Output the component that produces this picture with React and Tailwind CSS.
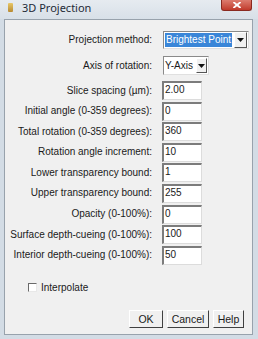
import React from "react";

const rows = [
  ["Slice spacing (µm):", "2.00"],
  ["Initial angle (0-359 degrees):", "0"],
  ["Total rotation (0-359 degrees):", "360"],
  ["Rotation angle increment:", "10"],
  ["Lower transparency bound:", "1"],
  ["Upper transparency bound:", "255"],
  ["Opacity (0-100%):", "0"],
  ["Surface depth-cueing (0-100%):", "100"],
  ["Interior depth-cueing (0-100%):", "50"],
];

const buttons = [
  ["OK", "w-[34px]"],
  ["Cancel", "w-[42px]"],
  ["Help", "w-[31px]"],
];

function Arrow() {
  return (
    <svg width="7" height="4" viewBox="0 0 7 4">
      <path d="M0 0 H7 L3.5 4 Z" fill="#111" />
    </svg>
  );
}

function Label({ children }) {
  return (
    <div className="w-[147px] shrink-0 text-right text-[10px] leading-none text-[#1a1a1a] whitespace-nowrap">
      {children}
    </div>
  );
}

export default function App() {
  return (
    <div
      className="w-[258px] h-[339px] bg-[#d3dce5] flex flex-col overflow-hidden"
      style={{ fontFamily: '"Liberation Sans", Arial, sans-serif' }}
    >
      {/* title bar */}
      <div className="h-[19px] shrink-0 flex items-start bg-gradient-to-b from-[#e6ebf0] to-[#d8e0e8]">
        <div className="mt-[3px] ml-[8px] w-[5px] h-[9px] bg-gradient-to-b from-[#e8c868] to-[#b88a30] rounded-[1px]" />
        <div
          className="ml-[9px] mt-[1px] text-[11px] leading-[13px] text-[#1e2a36]"
          style={{ fontFamily: '"Noto Sans", "Open Sans", sans-serif' }}
        >
          3D Projection
        </div>
        <div className="ml-auto mr-[6px] w-[31px] h-[11px] rounded-b-[3px] bg-gradient-to-b from-[#dc7b6e] to-[#c0392b] border border-t-0 border-[#8a2a20] flex items-center justify-center">
          <svg width="8" height="6" viewBox="0 0 8 6">
            <path d="M1 0.5 L7 5.5 M7 0.5 L1 5.5" stroke="#fff" strokeWidth="1.8" strokeLinecap="round" />
          </svg>
        </div>
      </div>

      {/* panel */}
      <div className="ml-[4px] w-[249px] h-[316px] shrink-0 border border-[#98a2ac] bg-[#f0f0f0] flex flex-col pt-[11px]">
        {/* projection method */}
        <div className="flex items-center h-[18px]">
          <Label>Projection method:</Label>
          <div className="ml-[11px] h-[18px] w-[86px] bg-white border border-t-[#8a8a8a] border-l-[#8a8a8a] border-b-[#e0e0e0] border-r-[#e0e0e0] flex items-center pl-[1px]">
            <div className="h-[14px] w-[67px] bg-[#3a86d8] text-white text-[10px] leading-[14px] pl-[1px] whitespace-nowrap">
              Brightest Point
            </div>
            <div className="ml-[2px] h-[16px] w-[13px] bg-[#f0f0f0] border border-t-white border-l-white border-b-[#555] border-r-[#555] flex items-center justify-center">
              <Arrow />
            </div>
          </div>
        </div>

        {/* axis */}
        <div className="flex items-center h-[19px] mt-[7px]">
          <Label>Axis of rotation:</Label>
          <div className="ml-[11px] h-[19px] w-[46px] bg-white border border-t-[#8a8a8a] border-l-[#8a8a8a] border-b-[#e0e0e0] border-r-[#e0e0e0] flex items-center pl-[1px]">
            <div className="text-[10px] leading-none text-[#1a1a1a] whitespace-nowrap">Y-Axis</div>
            <div className="ml-auto mr-[1px] h-[15px] w-[11px] bg-[#f0f0f0] border border-t-white border-l-white border-b-[#555] border-r-[#555] flex items-center justify-center">
              <Arrow />
            </div>
          </div>
        </div>

        {/* fields */}
        <div className="flex flex-col gap-[1.6px] mt-[6px]">
          {rows.map(([label, value]) => (
            <div key={label} className="flex items-center h-[19px]">
              <Label>{label}</Label>
              <div className="ml-[10px] h-[19px] w-[40px] bg-white border-t-2 border-l-2 border-t-[#7c7c7c] border-l-[#7c7c7c] border-b border-r border-b-[#dcdcdc] border-r-[#dcdcdc] text-[10px] leading-[12px] pl-[1px] pt-[1px] text-[#1a1a1a]">
                {value}
              </div>
            </div>
          ))}
        </div>

        {/* checkbox */}
        <div className="flex items-center mt-[18px] pl-[23px] h-[10px]">
          <div className="w-[9px] h-[9px] bg-white border border-t-[#6a6a6a] border-l-[#6a6a6a] border-b-[#e8e8e8] border-r-[#e8e8e8]" />
          <span className="ml-[4px] text-[10px] leading-none text-[#1a1a1a]">Interpolate</span>
        </div>

        {/* buttons */}
        <div className="flex justify-end mt-[17px] pr-[8px] gap-[4px]">
          {buttons.map(([t, w]) => (
            <div
              key={t}
              className={`${w} h-[18px] bg-[#f0f0f0] border border-t-white border-l-white border-b-[#404040] border-r-[#404040] text-[10.5px] leading-none text-[#1a1a1a] flex items-center justify-center`}
            >
              {t}
            </div>
          ))}
        </div>
      </div>
    </div>
  );
}
